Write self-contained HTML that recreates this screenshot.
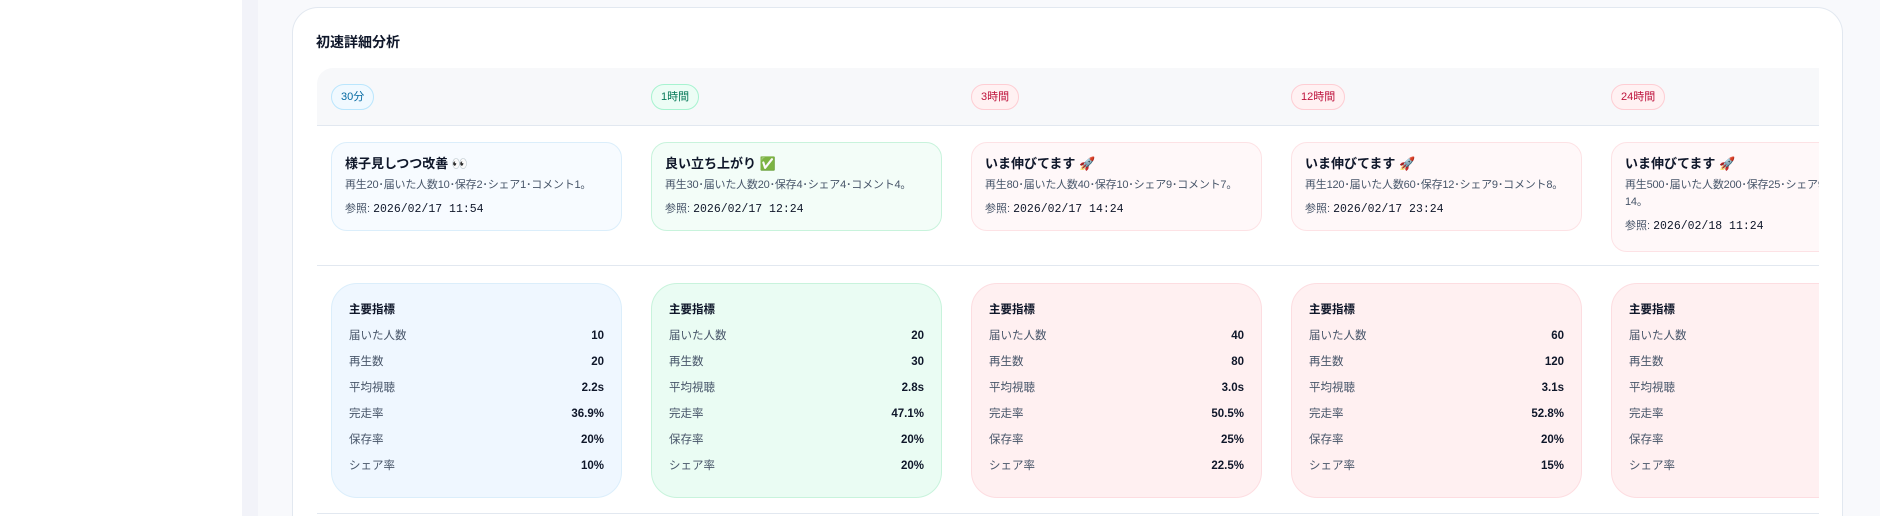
<!DOCTYPE html>
<html><head><meta charset="utf-8"><style>
*{box-sizing:border-box;margin:0;padding:0}
html{width:1880px;height:516px;overflow:hidden}
body{width:1880px;height:516px;overflow:hidden;background:#f8f9fc;font-family:"Liberation Sans","Noto Sans CJK JP",sans-serif;color:#0f172a;position:relative}
.side{position:absolute;left:0;top:0;width:242px;height:516px;background:#fff}
.strip{position:absolute;left:242px;top:0;width:16px;height:516px;background:#f2f3f9}
.card{position:absolute;left:292px;top:7px;width:1551px;height:509px;background:#fff;border:1px solid #e2e8f0;border-bottom:none;border-radius:26px 26px 0 0}
.title{position:absolute;left:316px;top:32px;font-size:14px;font-weight:bold}
.wrap{position:absolute;left:317px;top:68px;width:1502px;height:448px;overflow:hidden}
.band{position:absolute;left:0;top:0;width:1502px;height:58px;background:#f7f8fa;border-bottom:1px solid #e2e8f0;border-top-left-radius:16px}
.pill{position:absolute;top:16px;height:26px;padding:0 9px;border-radius:13px;font-size:11px;line-height:24px;border:1px solid}
.b{color:#0369a1;background:#f0f9ff;border-color:#bae6fd}
.g{color:#047857;background:#ecfdf5;border-color:#a7f3d0}
.r{color:#be123c;background:#fff1f2;border-color:#fecdd3}
.c1{position:absolute;top:74px;width:291px;height:89px;border:1px solid;border-radius:16px;padding:12px 0 0 13px}
.c1 h4{font-size:13px;font-weight:bold;line-height:18px}
.c1 p{font-size:11px;color:#475569;line-height:17px;margin-top:4px;white-space:nowrap;letter-spacing:-0.2px}
.c1 .ref{font-size:11px;color:#475569;margin-top:6px}
.c1 .ref span{font-family:"Liberation Mono",monospace;color:#0f172a;font-size:11.5px}
.b1{background:#f7fbff;border-color:#dbeefb}
.g1{background:#f3fdf8;border-color:#c8f3dc}
.r1{background:#fff8f9;border-color:#fde2e5}
.div{position:absolute;left:0;height:1px;width:1502px;background:#e2e8f0}
.c2{position:absolute;top:215px;width:291px;height:215px;border:1px solid;border-radius:26px;padding:17px 17px 0 17px}
.c2 h4{font-size:11.5px;font-weight:bold;margin-bottom:6px}
.row{display:flex;justify-content:space-between;font-size:11.5px;height:26px;line-height:26px}
.row span:first-child{color:#475569}
.row span:last-child{font-weight:bold}
.b2{background:#eff7ff;border-color:#dbeefb}
.g2{background:#eafcf3;border-color:#c8f3dc}
.r2{background:#fff0f1;border-color:#fddde1}
</style></head><body>
<div class="side"></div><div class="strip"></div>
<div class="card"></div>
<div class="title">初速詳細分析</div>
<div class="wrap">
<div class="band"></div>
<div class="pill b" style="left:14px">30分</div>
<div class="pill g" style="left:334px">1時間</div>
<div class="pill r" style="left:654px">3時間</div>
<div class="pill r" style="left:974px">12時間</div>
<div class="pill r" style="left:1294px">24時間</div>

<div class="c1 b1" style="left:14px"><h4>様子見しつつ改善 👀</h4><p>再生20･届いた人数10･保存2･シェア1･コメント1。</p><div class="ref">参照: <span>2026/02/17 11:54</span></div></div>
<div class="c1 g1" style="left:334px"><h4>良い立ち上がり ✅</h4><p>再生30･届いた人数20･保存4･シェア4･コメント4。</p><div class="ref">参照: <span>2026/02/17 12:24</span></div></div>
<div class="c1 r1" style="left:654px"><h4>いま伸びてます 🚀</h4><p>再生80･届いた人数40･保存10･シェア9･コメント7。</p><div class="ref">参照: <span>2026/02/17 14:24</span></div></div>
<div class="c1 r1" style="left:974px"><h4>いま伸びてます 🚀</h4><p>再生120･届いた人数60･保存12･シェア9･コメント8。</p><div class="ref">参照: <span>2026/02/17 23:24</span></div></div>
<div class="c1 r1" style="left:1294px;height:110px;width:300px"><h4>いま伸びてます 🚀</h4><p>再生500･届いた人数200･保存25･シェア9･コメント<br>14。</p><div class="ref">参照: <span>2026/02/18 11:24</span></div></div>

<div class="div" style="top:197px"></div>

<div class="c2 b2" style="left:14px"><h4>主要指標</h4>
<div class="row"><span>届いた人数</span><span>10</span></div><div class="row"><span>再生数</span><span>20</span></div><div class="row"><span>平均視聴</span><span>2.2s</span></div><div class="row"><span>完走率</span><span>36.9%</span></div><div class="row"><span>保存率</span><span>20%</span></div><div class="row"><span>シェア率</span><span>10%</span></div></div>
<div class="c2 g2" style="left:334px"><h4>主要指標</h4>
<div class="row"><span>届いた人数</span><span>20</span></div><div class="row"><span>再生数</span><span>30</span></div><div class="row"><span>平均視聴</span><span>2.8s</span></div><div class="row"><span>完走率</span><span>47.1%</span></div><div class="row"><span>保存率</span><span>20%</span></div><div class="row"><span>シェア率</span><span>20%</span></div></div>
<div class="c2 r2" style="left:654px"><h4>主要指標</h4>
<div class="row"><span>届いた人数</span><span>40</span></div><div class="row"><span>再生数</span><span>80</span></div><div class="row"><span>平均視聴</span><span>3.0s</span></div><div class="row"><span>完走率</span><span>50.5%</span></div><div class="row"><span>保存率</span><span>25%</span></div><div class="row"><span>シェア率</span><span>22.5%</span></div></div>
<div class="c2 r2" style="left:974px"><h4>主要指標</h4>
<div class="row"><span>届いた人数</span><span>60</span></div><div class="row"><span>再生数</span><span>120</span></div><div class="row"><span>平均視聴</span><span>3.1s</span></div><div class="row"><span>完走率</span><span>52.8%</span></div><div class="row"><span>保存率</span><span>20%</span></div><div class="row"><span>シェア率</span><span>15%</span></div></div>
<div class="c2 r2" style="left:1294px"><h4>主要指標</h4>
<div class="row"><span>届いた人数</span><span>200</span></div><div class="row"><span>再生数</span><span>500</span></div><div class="row"><span>平均視聴</span><span>3.3s</span></div><div class="row"><span>完走率</span><span>55.0%</span></div><div class="row"><span>保存率</span><span>5%</span></div><div class="row"><span>シェア率</span><span>1.8%</span></div></div>

<div class="div" style="top:445px"></div>
</div>
</body></html>
